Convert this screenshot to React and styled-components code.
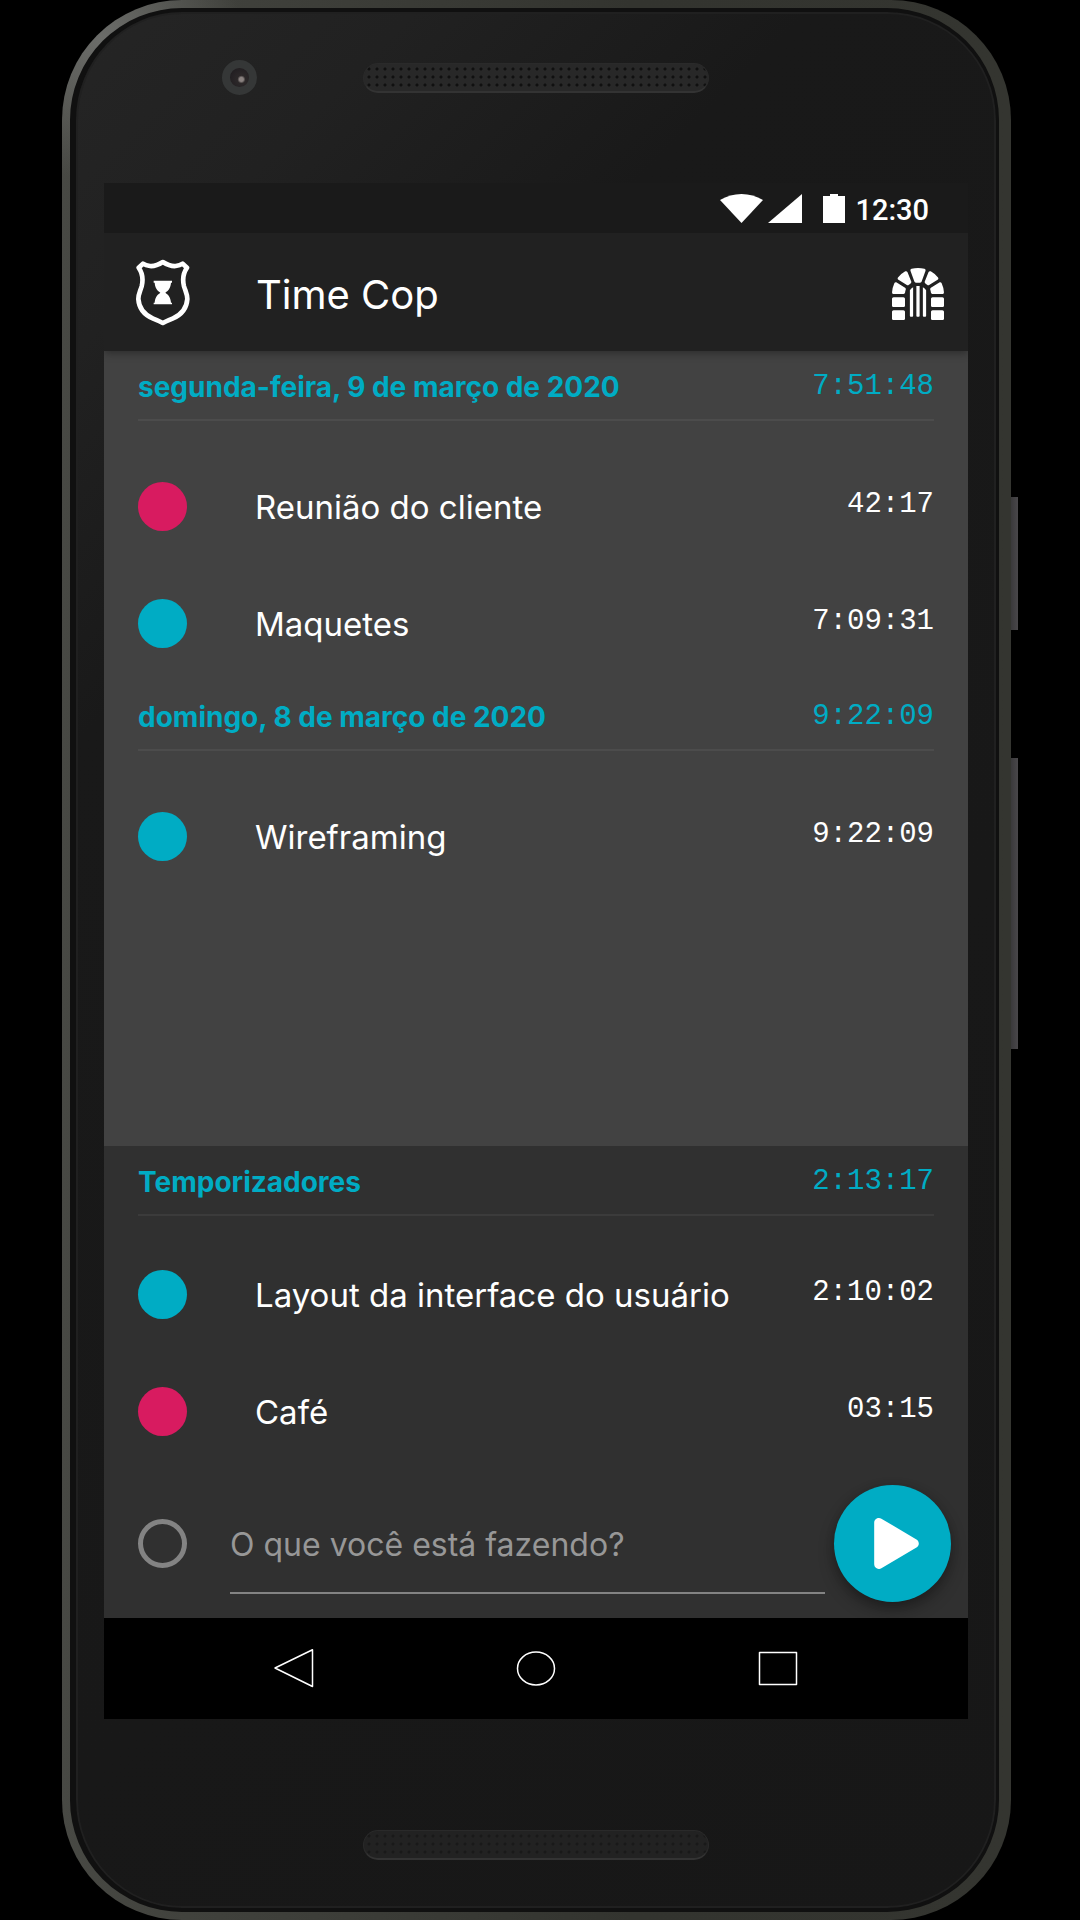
import React from 'react';
import styled, { createGlobalStyle } from 'styled-components';
import { FaDungeon, FaPlay } from 'react-icons/fa';

const TEAL = '#00acc4';
const PINK = '#d81b60';

const GlobalStyle = createGlobalStyle`
  *, *::before, *::after { box-sizing: border-box; }
  body {
    margin: 0;
    background: #000;
    color: #fff;
    font-family: Inter, "Liberation Sans", sans-serif;
  }
  button { border: 0; padding: 0; background: none; color: inherit; cursor: pointer; }
  h1, h2, ul { margin: 0; padding: 0; font-weight: inherit; }
  ul { list-style: none; }
`;

const Stage = styled.div`
  display: flex;
  min-height: 100vh;
  padding: 0 62px;
`;

const Phone = styled.div`
  flex: 1;
  display: flex;
  padding: 8px 12px 8px 8px;
  border-radius: 120px;
  background:
    radial-gradient(circle at 40px 40px, #6c6d6a 0, transparent 140px),
    linear-gradient(to right, #484944 0, #42433e 10%, #33342f 60%, #343530 100%);
`;

const Face = styled.div`
  flex: 1;
  display: flex;
  flex-direction: column;
  min-width: 0;
  border-radius: 112px;
  border: solid #101010;
  border-width: 4px 3px 4px 6px;
  box-shadow: inset 0 0 0 2px #202020;
  background: linear-gradient(135deg, #252525 0, #212121 12%, #191919 26%, #171717 100%);
`;

const TopBezel = styled.div`
  display: grid;
  grid-template-columns: 1fr auto 1fr;
  align-items: center;
  height: 171px;
  padding-bottom: 40px;
`;

const BottomBezel = styled.div`
  display: flex;
  justify-content: center;
  align-items: center;
  height: 189px;
  padding-top: 62px;
`;

const Camera = styled.span`
  justify-self: end;
  width: 35px;
  height: 35px;
  margin-right: 106px;
  border: 8px solid #353737;
  border-radius: 50%;
  background: radial-gradient(circle at 60% 60%, #8a8280 0 2px, #2c2829 4px, #1d1a1e 100%);
`;

const Speaker = styled.span`
  width: 346px;
  height: 30px;
  border-radius: 15px;
  border: 1px solid #2a2a2a;
  border-bottom: 2px solid #333;
  background: radial-gradient(circle, ${(p) => (p.$faint ? '#191919' : '#101010')} 0 1px, transparent 2px) 1px 1px / 8px 8px,
    ${(p) => (p.$faint ? '#222' : '#282828')};
`;

const Screen = styled.main`
  flex: 1;
  display: flex;
  flex-direction: column;
  margin: 0 28px;
  background: #303030;
`;

const StatusBar = styled.div`
  display: flex;
  align-items: center;
  justify-content: flex-end;
  height: 50px;
  padding-right: 39px;
  background: #1a1a1a;
  font: 500 29px/32px Roboto, sans-serif;
`;

const StatusIcon = styled.svg`
  height: 29px;
  width: ${(p) => p.$width}px;
  margin-right: ${(p) => p.$gap}px;
  fill: #fff;
`;

const Clock = styled.time`
  padding-top: 4px;
`;

const AppBar = styled.header`
  position: relative;
  display: flex;
  align-items: center;
  height: 118px;
  padding: 0 24px 0 32px;
  background: #212121;
  box-shadow: 0 2px 8px rgba(0, 0, 0, 0.35);
  clip-path: inset(0 0 -16px 0);
`;

const AppTitle = styled.h1`
  flex: 1;
  padding: 6px 0 0 66px;
  font-size: 40px;
  line-height: 48px;
`;

const IconButton = styled.button`
  display: flex;
`;

const MenuButton = styled(IconButton)`
  padding-top: 4px;
`;

const History = styled.section`
  flex: 1;
  background: #424242;
`;

const Running = styled.section`
  background: #303030;
`;

const GroupHeader = styled.div`
  display: flex;
  align-items: center;
  justify-content: space-between;
  height: 70px;
  margin: 0 34px ${(p) => p.$gap}px;
  border-bottom: 2px solid ${(p) => p.$line};
  color: ${TEAL};
`;

const GroupTitle = styled.h2`
  padding-top: 4px;
  font-size: 28px;
  line-height: 36px;
  font-weight: 700;
`;

const Duration = styled.time`
  padding-bottom: 4px;
  font-family: "Liberation Mono", monospace;
  font-size: 29px;
  line-height: 32px;

  ${GroupHeader} & {
    padding: 4px 0 0;
  }
`;

const Row = styled.li`
  display: flex;
  align-items: center;
  height: 117px;
  padding: 2px 34px 0;
`;

const Dot = styled.span`
  width: 49px;
  height: 49px;
  border-radius: 50%;
  background: ${(p) => p.$color};
`;

const RowLabel = styled.span`
  flex: 1;
  padding-left: 68px;
  font-size: 33px;
  line-height: 40px;
`;

const NewTimer = styled.form`
  display: flex;
  align-items: center;
  height: 149px;
  padding: 0 17px 0 34px;
`;

const ProjectButton = styled.button`
  width: 49px;
  height: 49px;
  border: 5px solid #838383;
  border-radius: 50%;
`;

const TaskInput = styled.input`
  flex: 1;
  min-width: 0;
  height: 100px;
  margin: 0 9px 0 43px;
  padding: 4px 0 0;
  border: 0;
  border-bottom: 2px solid #838383;
  outline: 0;
  background: none;
  color: #fff;
  font: 32px/40px Inter, "Liberation Sans", sans-serif;
  &::placeholder { color: #979797; opacity: 1; }
`;

const StartButton = styled.button`
  display: flex;
  align-items: center;
  justify-content: center;
  width: 117px;
  height: 117px;
  padding-left: 8px;
  border-radius: 50%;
  background: ${TEAL};
  box-shadow: 0 8px 16px rgba(0, 0, 0, 0.3), 0 2px 8px rgba(0, 0, 0, 0.15);
`;

const NavBar = styled.nav`
  position: relative;
  display: flex;
  align-items: center;
  justify-content: space-between;
  height: 101px;
  padding: 0 170px;
  background: #000;
`;

const NavIcon = styled.svg`
  width: 40px;
  height: 40px;
  fill: none;
  stroke: #fff;
  stroke-width: 1.5;
  stroke-linejoin: round;
`;

const SideKeys = styled.div`
  width: 7px;
  padding-top: 497px;
`;

const SideKey = styled.div`
  height: ${(p) => p.$length}px;
  margin-bottom: 128px;
  background: linear-gradient(to right, #3a393b, #49474a);
`;

function Badge() {
  return (
    <svg width="54" height="67" viewBox="138 86 162 201" aria-hidden="true">
      <path
        d="M218.500 95C206 103 192 108 180 107C172 106 165 104 159 100L146 112C157 128 160 148 155 168C150 184 145 192 145 206C147 236 165 254 188 264C200 269 210 273 218.500 278C227 273 237 269 249 264C272 254 290 236 292 206C292 192 287 184 282 168C277 148 280 128 291 112L278 100C272 104 265 106 257 107C245 108 231 103 218.500 95Z"
        fill="none"
        stroke="#fff"
        strokeWidth="14"
        strokeLinejoin="round"
      />
      <path
        d="M191 151H246V157H243C242 172 236 180 226 187C236 194 242 202 243 217H246V222H191V217H194C195 202 201 194 211 187C201 180 195 172 194 157H191Z"
        fill="#fff"
      />
    </svg>
  );
}

const days = [
  {
    title: 'segunda-feira, 9 de março de 2020',
    total: '7:51:48',
    entries: [
      { label: 'Reunião do cliente', time: '42:17', color: PINK },
      { label: 'Maquetes', time: '7:09:31', color: TEAL },
    ],
  },
  {
    title: 'domingo, 8 de março de 2020',
    total: '9:22:09',
    entries: [{ label: 'Wireframing', time: '9:22:09', color: TEAL }],
  },
];

const timers = {
  title: 'Temporizadores',
  total: '2:13:17',
  entries: [
    { label: 'Layout da interface do usuário', time: '2:10:02', color: TEAL },
    { label: 'Café', time: '03:15', color: PINK },
  ],
};

function Group({ title, total, entries, gap, line }) {
  return (
    <>
      <GroupHeader $gap={gap} $line={line}>
        <GroupTitle>{title}</GroupTitle>
        <Duration>{total}</Duration>
      </GroupHeader>
      <ul>
        {entries.map((e) => (
          <Row key={e.label}>
            <Dot $color={e.color} />
            <RowLabel>{e.label}</RowLabel>
            <Duration>{e.time}</Duration>
          </Row>
        ))}
      </ul>
    </>
  );
}

export default function App() {
  return (
    <>
      <GlobalStyle />
      <Stage>
        <Phone>
          <Face>
            <TopBezel>
              <Camera />
              <Speaker />
            </TopBezel>
            <Screen>
              <StatusBar>
                <StatusIcon $width={43} $gap={5} viewBox="0 0 43 29" aria-hidden="true">
                  <path d="M0 6C13-2 30-2 43 6L21.500 29Z" />
                </StatusIcon>
                <StatusIcon $width={34} $gap={21} viewBox="0 0 34 29" aria-hidden="true">
                  <path d="M34 0V29H0Z" />
                </StatusIcon>
                <StatusIcon $width={22} $gap={10} viewBox="0 0 22 29" aria-hidden="true">
                  <path d="M0 2H7V0H15V2H22V29H0Z" />
                </StatusIcon>
                <Clock>12:30</Clock>
              </StatusBar>
              <AppBar>
                <Badge />
                <AppTitle>Time Cop</AppTitle>
                <MenuButton type="button" aria-label="Menu">
                  <FaDungeon size={52} />
                </MenuButton>
              </AppBar>
              <History>
                {days.map((d) => (
                  <Group key={d.title} {...d} gap={26} line="#4c4c4c" />
                ))}
              </History>
              <Running>
                <Group {...timers} gap={19} line="#3b3b3b" />
                <NewTimer onSubmit={(e) => e.preventDefault()}>
                  <ProjectButton type="button" aria-label="Projeto" />
                  <TaskInput aria-label="O que você está fazendo?" placeholder="O que você está fazendo?" />
                  <StartButton type="submit" aria-label="Iniciar">
                    <FaPlay size={51} />
                  </StartButton>
                </NewTimer>
              </Running>
              <NavBar>
                <IconButton type="button" aria-label="Voltar">
                  <NavIcon viewBox="0 0 40 40"><path d="M1 19L38.500 0.750V37.500Z" /></NavIcon>
                </IconButton>
                <IconButton type="button" aria-label="Início">
                  <NavIcon viewBox="0 0 40 40"><ellipse cx="20" cy="19.500" rx="18.500" ry="16.500" /></NavIcon>
                </IconButton>
                <IconButton type="button" aria-label="Recentes">
                  <NavIcon viewBox="0 0 40 40"><rect x="1.500" y="3.500" width="37" height="32" /></NavIcon>
                </IconButton>
              </NavBar>
            </Screen>
            <BottomBezel>
              <Speaker $faint />
            </BottomBezel>
          </Face>
        </Phone>
        <SideKeys>
          <SideKey $length={133} />
          <SideKey $length={291} />
        </SideKeys>
      </Stage>
    </>
  );
}
